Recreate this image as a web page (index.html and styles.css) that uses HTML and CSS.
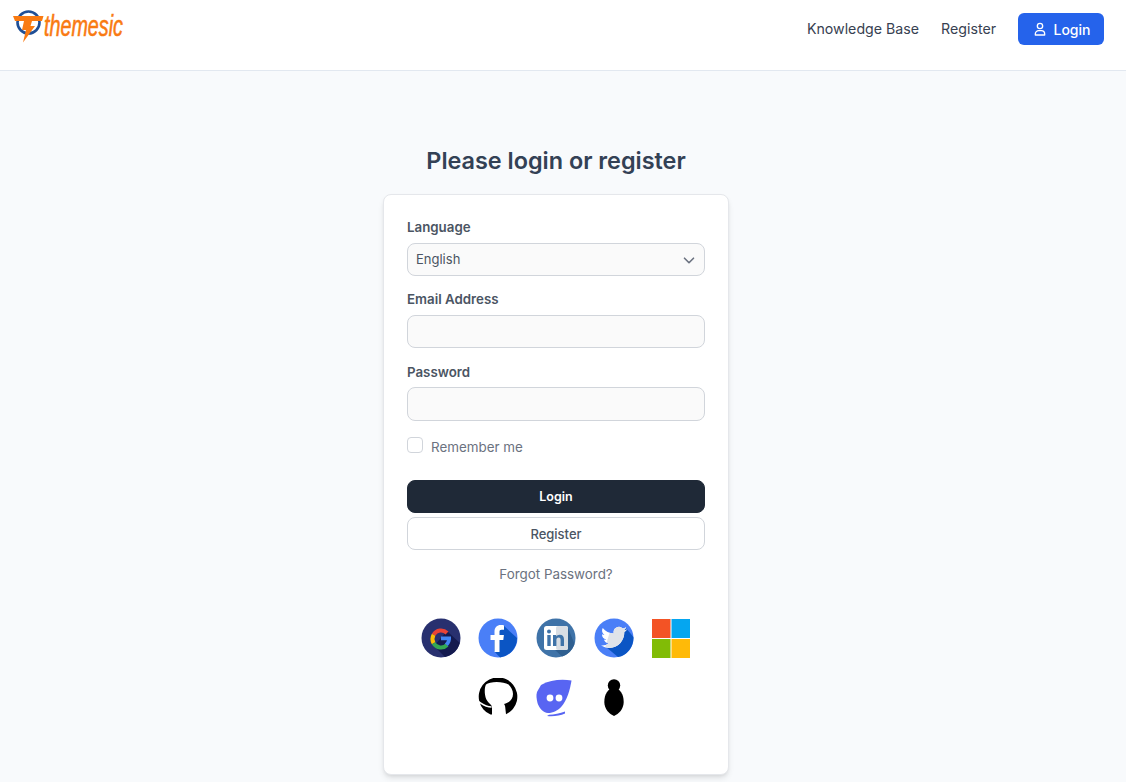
FILE: index.html
```html
<!DOCTYPE html>
<html lang="en">
<head>
<meta charset="utf-8">
<title>Login</title>
<link rel="stylesheet" href="styles.css">
</head>
<body>
<header class="navbar">
  <a class="logo" href="#">
    <svg class="logo-mark" viewBox="0 0 34 34" width="34" height="34">
      <circle cx="16.500" cy="13.500" r="11" fill="none" stroke="#1f4f96" stroke-width="2.600"/>
      <path d="M1 7h30.500l-1.500 5H20l-1.500 5h4.500L11 33.500l3-12.500h-4l2-9H3z" fill="#f97a12"/>
    </svg>
    <span class="logo-text">themesic</span>
  </a>
  <nav class="nav">
    <a class="nav-link" href="#">Knowledge Base</a>
    <a class="nav-link" href="#">Register</a>
    <a class="nav-btn" href="#">
      <svg viewBox="0 0 24 24" width="16" height="16" fill="none" stroke="currentColor" stroke-width="2" stroke-linecap="round" stroke-linejoin="round"><circle cx="12" cy="7.500" r="4"/><path d="M5 21v-1.500a5 5 0 0 1 5-5h4a5 5 0 0 1 5 5V21z"/></svg>
      Login
    </a>
  </nav>
</header>
<main class="main">
  <h1 class="title">Please login or register</h1>
  <section class="card">
    <form class="form">
      <label class="label" for="lang">Language</label>
      <div class="select-wrap">
        <select id="lang" class="field select"><option>English</option></select>
        <svg class="chevron" viewBox="0 0 20 20" width="18" height="18" fill="none" stroke="#6b7280" stroke-width="1.800" stroke-linecap="round" stroke-linejoin="round"><path d="M5 8l5 5 5-5"/></svg>
      </div>
      <label class="label gap" for="email">Email Address</label>
      <input id="email" class="field" type="text">
      <label class="label gap" for="pw">Password</label>
      <input id="pw" class="field" type="password">
      <label class="check-row"><input class="check" type="checkbox"><span>Remember me</span></label>
      <button class="btn btn-dark" type="button">Login</button>
      <button class="btn btn-light" type="button">Register</button>
      <a class="forgot" href="#">Forgot Password?</a>
    </form>
    <div class="socials">
      <a class="social" href="#" aria-label="Google">
        <svg viewBox="0 0 40 40" width="40" height="40">
          <circle cx="20" cy="20" r="19.500" fill="#28306f"/>
          <path d="M26 13L38.800 25A19.500 19.500 0 0 1 24 39L13 28z" fill="#141a4f"/>
          <path d="M26 15A8.500 8.500 0 0 0 12.600 16.800" fill="none" stroke="#ea4335" stroke-width="4"/>
          <path d="M12.600 16.800A8.500 8.500 0 0 0 12.600 25.200" fill="none" stroke="#fbbc05" stroke-width="4"/>
          <path d="M12.600 25.200A8.500 8.500 0 0 0 26 27" fill="none" stroke="#34a853" stroke-width="4"/>
          <path d="M20 18.500h10c.4 3.800-.8 7-3.200 9.500l-3-2.500c1.200-1 1.900-2 2.200-3.200h-6z" fill="#4285f4"/>
        </svg>
      </a>
      <a class="social" href="#" aria-label="Facebook">
        <svg viewBox="0 0 40 40" width="40" height="40">
          <circle cx="20" cy="20" r="19.500" fill="#4a7ff7"/>
          <path d="M25 7L39 20A19.500 19.500 0 0 1 22 39.400L16 33V18z" fill="#0b55c4"/>
          <path d="M16.500 34V22h-4v-5h4v-3.500C16.500 9.500 19 7 22.800 7c1.500 0 2.700.1 3.200.2v4.500h-2.300c-1.800 0-2.200.9-2.200 2.200V17h4.400l-.6 5h-3.800v12z" fill="#fff"/>
        </svg>
      </a>
      <a class="social" href="#" aria-label="LinkedIn">
        <svg viewBox="0 0 40 40" width="40" height="40">
          <circle cx="20" cy="20" r="19.500" fill="#3f73a8"/>
          <path d="M32 10L38.500 26A19.500 19.500 0 0 1 26 38.500L18 31z" fill="#2f5f90"/>
          <rect x="8" y="8" width="24" height="24" rx="2.500" fill="#fff"/>
          <rect x="20" y="8" width="12" height="24" rx="2" fill="#d9dee4"/>
          <circle cx="13" cy="13.500" r="2" fill="#3f73a8"/>
          <rect x="11.300" y="17" width="3.400" height="11" fill="#3f73a8"/>
          <path d="M17 17h3.200v1.600c.7-1.200 2-1.900 3.500-1.900 3 0 4.300 1.900 4.300 4.900V28h-3.400v-5.800c0-1.600-.5-2.600-1.900-2.600-1.500 0-2.300 1-2.300 2.700V28H17z" fill="#3f73a8"/>
        </svg>
      </a>
      <a class="social" href="#" aria-label="Twitter">
        <svg viewBox="0 0 40 40" width="40" height="40">
          <defs>
            <clipPath id="bird-shade"><path d="M20 0H40V40H8z"/></clipPath>
            <path id="bird" d="M23.953 4.570a10 10 0 01-2.825.775 4.958 4.958 0 002.163-2.723c-.951.555-2.005.959-3.127 1.184a4.920 4.920 0 00-8.384 4.482C7.690 8.095 4.067 6.130 1.640 3.162a4.822 4.822 0 00-.666 2.475c0 1.710.870 3.213 2.188 3.993a4.904 4.904 0 01-2.228-.616v.06a4.923 4.923 0 003.946 4.827 4.996 4.996 0 01-2.212.085 4.936 4.936 0 004.604 3.417 9.867 9.867 0 01-6.102 2.105c-.390 0-.779-.023-1.170-.067a13.995 13.995 0 007.557 2.209c9.053 0 13.998-7.496 13.998-13.985 0-.210 0-.420-.015-.630A9.935 9.935 0 0024 4.590z"/>
          </defs>
          <circle cx="20" cy="20" r="19.500" fill="#4a7ff7"/>
          <path d="M32 10L39.400 19A19.500 19.500 0 0 1 24 39.100L12 29z" fill="#0b55c4"/>
          <use href="#bird" transform="translate(7 6.500) scale(1.080)" fill="#fff"/>
          <g clip-path="url(#bird-shade)"><use href="#bird" transform="translate(7 6.500) scale(1.080)" fill="#dfe3e9"/></g>
        </svg>
      </a>
      <a class="social" href="#" aria-label="Microsoft">
        <svg viewBox="0 0 40 40" width="40" height="40">
          <rect x="1" y="1" width="18.500" height="19" fill="#f35325"/>
          <rect x="20.500" y="1" width="18.500" height="19" fill="#05a6f0"/>
          <rect x="1" y="21" width="18.500" height="19" fill="#81bc06"/>
          <rect x="20.500" y="21" width="18.500" height="19" fill="#ffba08"/>
        </svg>
      </a>
      <a class="social" href="#" aria-label="GitHub">
        <svg viewBox="0 0 40 40" width="40" height="40">
          <g transform="translate(-1.500 -1)">
            <path fill="#000" d="M14 37.500A19.300 19.300 0 1 1 29.500 37.300L28.800 31C28.800 29 28.300 28 27.500 27C32.500 26 36.500 22.500 36.500 17C36.500 13 34.500 10 32 7.500C27 4 13 4 9.500 7.500C7.500 11 7.500 22 12.500 26C14.500 27.500 15.500 29 15.500 31V37.500z"/>
            <path fill="none" stroke="#fff" stroke-width="1.600" d="M1 24C6 27 8 30 15 30"/>
          </g>
        </svg>
      </a>
      <a class="social" href="#" aria-label="Discord">
        <svg viewBox="0 0 40 40" width="40" height="40">
          <path d="M5 7C14 2 25 1 35.500 2.500C34 12 31 22 25.500 28.500C22 32.500 17 35 12 35C7 34.500 3 30 1.500 25C.5 21 0 17 1 14z" fill="#5865f2"/>
          <path d="M13 36.800C18 36.500 24 35.500 29 33.500L29 35.500C24 38 17 38.500 11 38z" fill="#5865f2"/>
          <circle cx="14" cy="20" r="3.400" fill="#fff"/>
          <circle cx="23" cy="20" r="3.400" fill="#fff"/>
        </svg>
      </a>
      <a class="social" href="#" aria-label="Provider">
        <svg viewBox="0 0 40 40" width="40" height="40">
          <circle cx="20" cy="7.500" r="6.200" fill="#000"/>
          <path d="M20 9c6 2 9.700 7 9.700 15 0 7-5 12-9.700 14-4.700-2-9.700-7-9.700-14 0-8 3.700-13 9.700-15z" fill="#000"/>
        </svg>
      </a>
    </div>
  </section>
</main>
</body>
</html>
```

FILE: styles.css
```css
* { box-sizing: border-box; }
html, body { margin: 0; padding: 0; }
body {
  background: #f8fafc;
  font-family: Inter, "Liberation Sans", sans-serif;
  color: #374151;
  font-size: 14px;
}
a { text-decoration: none; color: inherit; }

.navbar {
  height: 71px;
  background: #fff;
  border-bottom: 1px solid #e2e8f0;
  display: flex;
  justify-content: space-between;
  align-items: flex-start;
  padding: 13px 22px 0 12px;
}
.logo { display: flex; align-items: flex-start; margin-top: -3px; width: 120px; }
.logo-mark { flex: none; margin-top: -1px; }
.logo-text {
  font-family: "Liberation Sans", sans-serif;
  font-style: italic;
  font-size: 29px;
  line-height: 32px;
  color: #f97a12;
  -webkit-text-stroke: .6px #f97a12;
  transform: scaleX(.68);
  transform-origin: left top;
  margin-left: -2px;
  white-space: nowrap;
}
.nav { display: flex; align-items: center; height: 32px; gap: 22px; }
.nav-link { font-size: 14.200px; color: #374151; margin-top: -2px; }
.nav-btn {
  display: flex;
  align-items: center;
  justify-content: center;
  gap: 6px;
  width: 86px;
  height: 32px;
  background: #2563eb;
  color: #fff;
  border-radius: 6px;
  font-weight: 500;
  font-size: 14px;
}

.main {
  display: flex;
  flex-direction: column;
  align-items: center;
  padding: 74px 14px 8px 0;
}
.title {
  margin: 0 0 17px;
  font-size: 23.400px;
  line-height: 32px;
  font-weight: 600;
  color: #334155;
}
.card {
  width: 346px;
  height: 581px;
  background: #fff;
  border: 1px solid #e5e7eb;
  border-radius: 8px;
  box-shadow: 0 4px 6px -1px rgba(0,0,0,.1), 0 2px 4px -2px rgba(0,0,0,.1);
  padding: 22px 23px 0;
}
.form { display: flex; flex-direction: column; }
.label {
  display: block;
  font-size: 13.300px;
  line-height: 20px;
  font-weight: 600;
  color: #4b5563;
  margin-bottom: 5.500px;
}
.gap { margin-top: 13.500px; }
.field {
  display: block;
  width: 100%;
  height: 33.400px;
  background: #fafafa;
  border: 1px solid #d1d5db;
  border-radius: 8px;
  padding: 0 8px;
  font: 13px Inter, "Liberation Sans", sans-serif;
  color: #4b5563;
  outline: none;
}
.select-wrap { position: relative; }
.select { appearance: none; -webkit-appearance: none; }
.chevron { position: absolute; right: 7px; top: 8px; pointer-events: none; }
.check-row {
  display: flex;
  align-items: center;
  gap: 8px;
  margin-top: 16px;
  height: 17px;
  color: #6b7280;
  font-size: 13.400px;
}
.check {
  appearance: none;
  -webkit-appearance: none;
  width: 16px;
  height: 16px;
  margin: 0;
  background: #fff;
  border: 1px solid #d1d5db;
  border-radius: 4px;
}
.check-row span { position: relative; top: 2px; }
.btn {
  display: block;
  width: 100%;
  height: 33px;
  border-radius: 8px;
  font: 500 13px Inter, "Liberation Sans", sans-serif;
  cursor: pointer;
}
.btn-dark {
  margin-top: 26px;
  background: #1f2937;
  border: 1px solid #1f2937;
  color: #fff;
  font-size: 12.500px;
  font-weight: 600;
}
.btn-light {
  margin-top: 4px;
  padding-top: 3px;
  background: #fff;
  border: 1px solid #d1d5db;
  color: #4b5563;
}
.forgot {
  margin-top: 16px;
  text-align: center;
  font-size: 13.400px;
  line-height: 17px;
  color: #6b7280;
}
.socials {
  display: flex;
  flex-wrap: wrap;
  justify-content: center;
  gap: 20px 17.600px;
  margin-top: 35px;
}
.social { display: block; width: 40px; height: 40px; }
.social svg { display: block; }
```
